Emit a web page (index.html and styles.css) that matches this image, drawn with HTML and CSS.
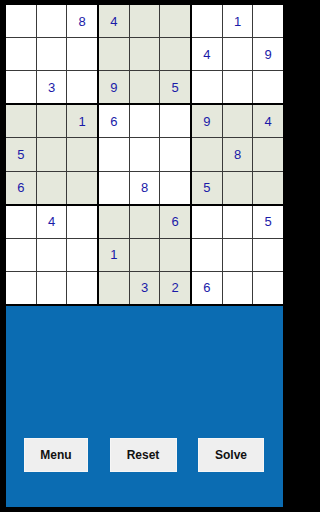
FILE: index.html
```html
<!DOCTYPE html>
<html>
<head>
<meta charset="utf-8">
<link rel="stylesheet" href="styles.css">
</head>
<body>
<div class="screen">
  <div class="board">
    <div class="box">
      <div class="cell"></div><div class="cell"></div><div class="cell">8</div>
      <div class="cell"></div><div class="cell"></div><div class="cell"></div>
      <div class="cell"></div><div class="cell">3</div><div class="cell"></div>
    </div>
    <div class="box shade">
      <div class="cell">4</div><div class="cell"></div><div class="cell"></div>
      <div class="cell"></div><div class="cell"></div><div class="cell"></div>
      <div class="cell">9</div><div class="cell"></div><div class="cell">5</div>
    </div>
    <div class="box">
      <div class="cell"></div><div class="cell">1</div><div class="cell"></div>
      <div class="cell">4</div><div class="cell"></div><div class="cell">9</div>
      <div class="cell"></div><div class="cell"></div><div class="cell"></div>
    </div>
    <div class="box shade">
      <div class="cell"></div><div class="cell"></div><div class="cell">1</div>
      <div class="cell">5</div><div class="cell"></div><div class="cell"></div>
      <div class="cell">6</div><div class="cell"></div><div class="cell"></div>
    </div>
    <div class="box">
      <div class="cell">6</div><div class="cell"></div><div class="cell"></div>
      <div class="cell"></div><div class="cell"></div><div class="cell"></div>
      <div class="cell"></div><div class="cell">8</div><div class="cell"></div>
    </div>
    <div class="box shade">
      <div class="cell">9</div><div class="cell"></div><div class="cell">4</div>
      <div class="cell"></div><div class="cell">8</div><div class="cell"></div>
      <div class="cell">5</div><div class="cell"></div><div class="cell"></div>
    </div>
    <div class="box">
      <div class="cell"></div><div class="cell">4</div><div class="cell"></div>
      <div class="cell"></div><div class="cell"></div><div class="cell"></div>
      <div class="cell"></div><div class="cell"></div><div class="cell"></div>
    </div>
    <div class="box shade">
      <div class="cell"></div><div class="cell"></div><div class="cell">6</div>
      <div class="cell">1</div><div class="cell"></div><div class="cell"></div>
      <div class="cell"></div><div class="cell">3</div><div class="cell">2</div>
    </div>
    <div class="box">
      <div class="cell"></div><div class="cell"></div><div class="cell">5</div>
      <div class="cell"></div><div class="cell"></div><div class="cell"></div>
      <div class="cell">6</div><div class="cell"></div><div class="cell"></div>
    </div>
  </div>
  <div class="panel">
    <button class="btn btn-menu">Menu</button>
    <button class="btn btn-reset">Reset</button>
    <button class="btn btn-solve">Solve</button>
  </div>
</div>
</body>
</html>
```
FILE: styles.css
```css
html, body {
  margin: 0;
  padding: 0;
  background: #000;
  width: 288px;
  height: 512px;
  overflow: hidden;
}
.screen {
  display: flex;
  flex-direction: column;
  padding: 5px 5px 5px 6px;
  height: 512px;
  box-sizing: border-box;
  gap: 2px;
}
.board {
  display: grid;
  grid-template-columns: 1fr 1fr 1fr;
  grid-template-rows: 1fr 1fr 1fr;
  gap: 2px;
  width: 277px;
  height: 299px;
  background: #000;
}
.box {
  display: grid;
  grid-template-columns: 1fr 1fr 1fr;
  grid-template-rows: 1fr 1fr 1fr;
  gap: 1px;
  background: #3a3a3a;
}
.cell {
  background: #fff;
  display: flex;
  align-items: center;
  justify-content: center;
  font-family: "Liberation Sans", Arial, sans-serif;
  font-size: 13px;
  color: #1a1aa8;
}
.shade .cell {
  background: #e5e8dc;
}
.panel {
  flex: 1;
  width: 277px;
  background: #0b6cb2;
  display: flex;
  align-items: flex-end;
  justify-content: space-between;
  padding: 0 19px 35px 18px;
  box-sizing: border-box;
}
.btn {
  height: 34px;
  border: 1px solid #f6f6f6;
  background: #efefef;
  font-family: "Liberation Sans", Arial, sans-serif;
  font-weight: bold;
  font-size: 12px;
  color: #111;
  padding: 0;
  border-radius: 0;
}
.btn-menu { width: 64px; }
.btn-reset { width: 67px; }
.btn-solve { width: 66px; }
```
